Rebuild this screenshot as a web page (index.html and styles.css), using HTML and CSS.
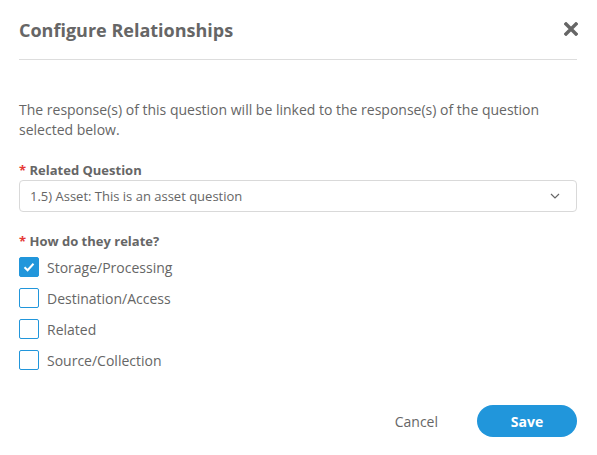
FILE: index.html
```html
<!DOCTYPE html>
<html>
<head>
<meta charset="utf-8">
<link rel="stylesheet" href="styles.css">
</head>
<body>
<div class="modal">
  <div class="header">
    <h1 class="title">Configure Relationships</h1>
    <button class="close" aria-label="Close">
      <svg width="14" height="14" viewBox="0 0 14 14"><path d="M2 2 L12 12 M12 2 L2 12" stroke="#666" stroke-width="3.4" stroke-linecap="square"/></svg>
    </button>
  </div>
  <div class="body">
    <p class="intro">The response(s) of this question will be linked to the response(s) of the question selected below.</p>
    <div class="field">
      <label class="label"><span class="req">*</span> Related Question</label>
      <div class="select">
        <span>1.5) Asset: This is an asset question</span>
        <svg width="10" height="6" viewBox="0 0 10 6"><path d="M1 1 L5 5 L9 1" fill="none" stroke="#666" stroke-width="1.2"/></svg>
      </div>
    </div>
    <div class="field">
      <label class="label"><span class="req">*</span> How do they relate?</label>
      <div class="checks">
        <div class="check"><span class="box on"><svg width="14" height="14" viewBox="0 0 14 14"><path d="M2.5 7.2 L5.6 10.2 L11.5 3.8" fill="none" stroke="#fff" stroke-width="2"/></svg></span>Storage/Processing</div>
        <div class="check"><span class="box"></span>Destination/Access</div>
        <div class="check"><span class="box"></span>Related</div>
        <div class="check"><span class="box"></span>Source/Collection</div>
      </div>
    </div>
  </div>
  <div class="footer">
    <button class="cancel">Cancel</button>
    <button class="save">Save</button>
  </div>
</div>
</body>
</html>
```
FILE: styles.css
```css
* { box-sizing: border-box; }
html, body { margin: 0; background: #fff; }
body { font-family: "Open Sans", sans-serif; color: #666; }
.modal { width: 597px; height: 455px; padding: 0 20px 0 19px; display: flex; flex-direction: column; }
.header { height: 60px; border-bottom: 1px solid #ddd; display: flex; align-items: center; justify-content: space-between; padding-top: 1px; }
.title { margin: 0; font-size: 18px; font-weight: 700; color: #666; }
.close { border: 0; background: none; padding: 0; margin-right: -1px; margin-top: -2px; display: flex; cursor: pointer; }
.body { padding-top: 40px; }
.intro { margin: 0; font-size: 14px; line-height: 20px; }
.field { margin-top: 21px; }
.field + .field { margin-top: 20px; }
.label { display: block; font-size: 13px; font-weight: 700; line-height: 18px; }
.req { color: #e53935; }
.select { margin-top: 1px; height: 32px; border: 1px solid #d9d9d9; border-radius: 4px; display: flex; align-items: center; justify-content: space-between; padding: 0 16px 0 10px; font-size: 13px; }
.checks { margin-top: 7px; display: flex; flex-direction: column; gap: 11px; }
.check { display: flex; align-items: center; gap: 8px; font-size: 14px; height: 20px; }
.box { width: 20px; height: 20px; border: 1px solid #2196db; border-radius: 2px; display: flex; align-items: center; justify-content: center; }
.box.on { background: #2196db; }
.footer { margin-top: auto; margin-bottom: 18px; display: flex; justify-content: flex-end; align-items: center; gap: 39px; }
.cancel { border: 0; background: none; font-family: inherit; font-size: 14px; color: #666; padding: 0; }
.save { width: 100px; height: 32px; border: 0; border-radius: 16px; background: #2196db; color: #fff; font-family: inherit; font-weight: 700; font-size: 14px; }
```
